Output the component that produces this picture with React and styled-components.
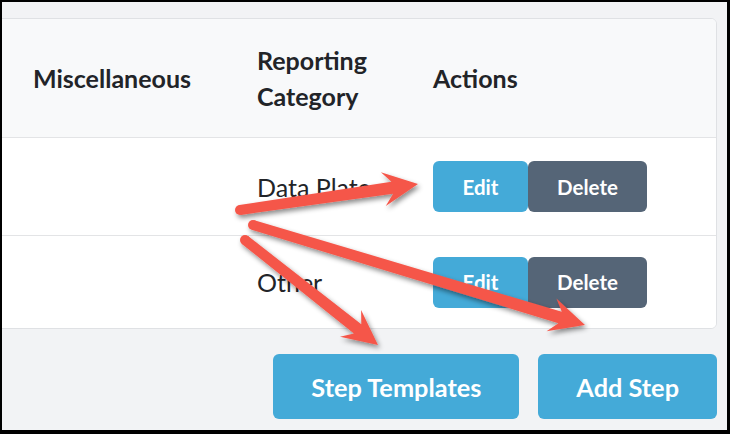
import React from "react";
import styled, { createGlobalStyle } from "styled-components";

const Global = createGlobalStyle`
  html, body { margin: 0; padding: 0; background: #000; }
  body { font-family: Lato, "Open Sans", Arial, sans-serif; }
`;

const Frame = styled.div`
  position: relative;
  width: 725px;
  height: 428px;
  margin: 2px 0 0 2px;
  padding: 16px 10px 0 0;
  box-sizing: border-box;
  background: #f2f3f5;
  overflow: hidden;
`;

const Card = styled.div`
  margin-left: -20px;
  background: #fff;
  border: 1px solid #dfe1e4;
  border-radius: 6px;
  overflow: hidden;
`;

const Row = styled.div`
  display: grid;
  grid-template-columns: 34px 224px 176px 1fr;
  align-items: center;
  height: ${(p) => p.$h}px;
  background: ${(p) => (p.$head ? "#f8f9fa" : "#fff")};
  border-bottom: ${(p) => (p.$last ? "none" : "1px solid #e3e4e6")};
`;

const Cell = styled.div`
  padding-left: 16px;
  font-size: 25px;
  line-height: 36px;
  color: #222428;
  font-weight: ${(p) => (p.$head ? 700 : 400)};
`;

const Group = styled.div`
  display: flex;
`;

const SmallBtn = styled.button`
  width: ${(p) => p.$w}px;
  height: 51px;
  padding: 0;
  border: none;
  border-radius: 6px;
  font-family: inherit;
  font-weight: 700;
  font-size: 20.5px;
  color: #fff;
  background: ${(p) => (p.$dark ? "#556577" : "#44aad8")};
`;

const Footer = styled.div`
  display: flex;
  justify-content: flex-end;
  gap: 19px;
  margin-top: 25px;
`;

const BigBtn = styled.button`
  height: 65px;
  padding: 0 38px;
  border: none;
  border-radius: 6px;
  font-family: inherit;
  font-weight: 700;
  font-size: 25.3px;
  color: #fff;
  background: #44aad8;
`;

const Overlay = styled.svg`
  position: absolute;
  left: -2px;
  top: -2px;
  pointer-events: none;
  overflow: visible;
`;

function arrowPoints(tx, ty, px, py, L = 35, H = 17, w1 = 5, w2 = 6) {
  const dx = px - tx, dy = py - ty;
  const len = Math.hypot(dx, dy);
  const ux = dx / len, uy = dy / len;
  const nx = -uy, ny = ux;
  const pt = (a, b) => `${a.toFixed(1)},${b.toFixed(1)}`;
  const neck = L - 9;
  return [
    pt(px, py),
    pt(px - ux * L + nx * H, py - uy * L + ny * H),
    pt(px - ux * neck + nx * w2, py - uy * neck + ny * w2),
    pt(tx + nx * w1, ty + ny * w1),
    pt(tx - nx * w1, ty - ny * w1),
    pt(px - ux * neck - nx * w2, py - uy * neck - ny * w2),
    pt(px - ux * L - nx * H, py - uy * L - ny * H),
  ].join(" ");
}

const arrows = [
  [240, 210, 418, 184],
  [253, 225, 585, 325],
  [245, 240, 378, 345],
];

function Arrows() {
  return (
    <Overlay width="730" height="434" viewBox="0 0 730 434">
      <defs>
        <filter id="sh" x="-20%" y="-20%" width="140%" height="140%">
          <feDropShadow dx="2" dy="3" stdDeviation="2.5" floodColor="#000" floodOpacity="0.45" />
        </filter>
      </defs>
      {arrows.map(([tx, ty, px, py], i) => (
        <g key={i} filter="url(#sh)" fill="#f5574a">
          <polygon points={arrowPoints(tx, ty, px, py)} />
          <circle cx={tx} cy={ty} r="5" />
        </g>
      ))}
    </Overlay>
  );
}

const rows = [
  { cat: "Data Plate", h: 97 },
  { cat: "Other", h: 92 },
];

export default function App() {
  return (
    <>
      <Global />
      <Frame>
        <Card>
          <Row $head $h={118}>
            <Cell $head />
            <Cell $head>Miscellaneous</Cell>
            <Cell $head>Reporting Category</Cell>
            <Cell $head>Actions</Cell>
          </Row>
          {rows.map((r, i) => (
            <Row key={r.cat} $h={r.h} $last={i === rows.length - 1}>
              <Cell />
              <Cell />
              <Cell>{r.cat}</Cell>
              <Cell>
                <Group>
                  <SmallBtn $w={95}>Edit</SmallBtn>
                  <SmallBtn $w={119} $dark>Delete</SmallBtn>
                </Group>
              </Cell>
            </Row>
          ))}
        </Card>
        <Footer>
          <BigBtn>Step Templates</BigBtn>
          <BigBtn>Add Step</BigBtn>
        </Footer>
        <Arrows />
      </Frame>
    </>
  );
}
